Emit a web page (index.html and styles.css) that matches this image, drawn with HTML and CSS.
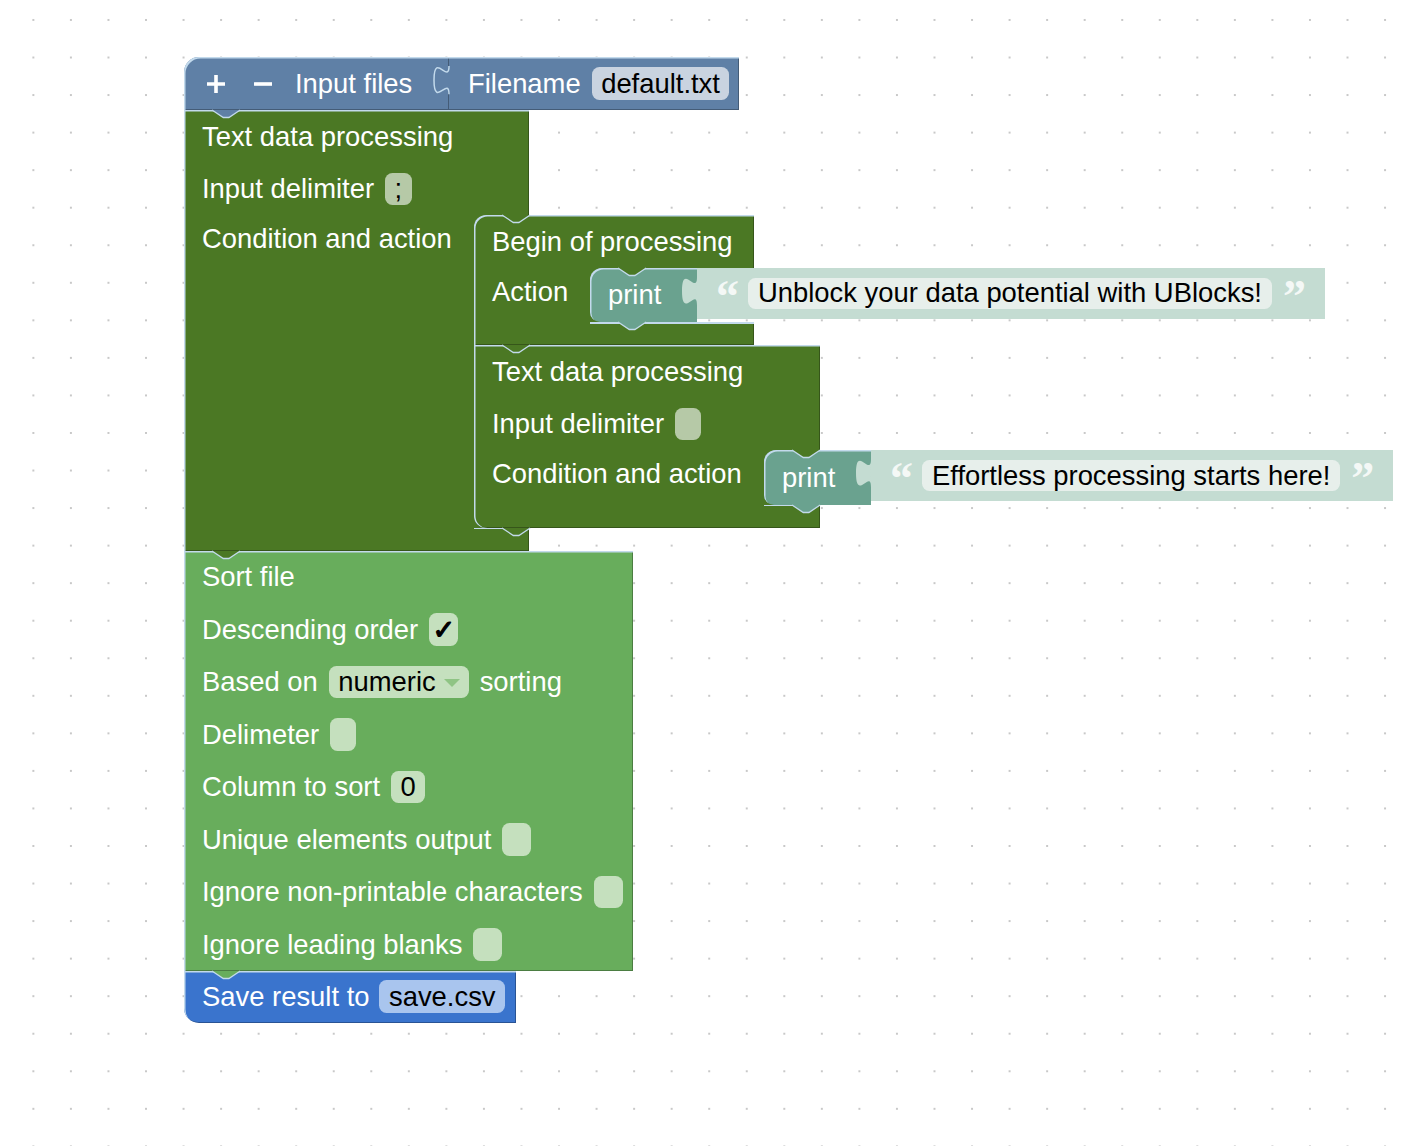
FILE: index.html
```html
<!DOCTYPE html>
<html>
<head>
<meta charset="utf-8">
<title>Blocks</title>
<link rel="stylesheet" href="styles.css">
</head>
<body>
<div class="ws">
  <div class="stack">

    <!-- Input files + Filename -->
    <div class="pair">
      <div class="blk simple b-files k-grey">
        <svg class="ico" viewBox="0 0 18 18"><path d="M9 0v18M0 9h18"/></svg>
        <svg class="ico ico-minus" viewBox="0 0 18 18"><path d="M0 9h18"/></svg>
        <span class="lbl">Input files</span>
        <svg class="notch" viewBox="0 0 28.2 7.5"><path class="nf" d="M0 0L11.3 7.5H16.9L28.2 0Z"/><path class="ns" d="M0 0L11.3 7.5H16.9L28.2 0"/></svg>
      </div>
      <div class="blk simple b-filename k-grey">
        <svg class="tab" viewBox="0 0 15 28.2"><path class="tf" d="M15 0C15 18.8 0 -15 0 14.1C0 43.2 15 9.4 15 28.2Z"/><path class="ts" d="M15 0C15 18.8 0 -15 0 14.1C0 43.2 15 9.4 15 28.2"/></svg>
        <span class="lbl">Filename</span>
        <span class="fld">default.txt</span>
      </div>
    </div>

    <!-- Text data processing (outer) -->
    <div class="blk cblk k-dg">
      <div class="c-head w-main">
        <div class="row"><span class="lbl">Text data processing</span></div>
        <div class="row"><span class="lbl">Input delimiter</span><span class="fld">;</span></div>
      </div>
      <div class="c-mid">
        <div class="c-spine sp-wide"><div class="row row-stmt"><span class="lbl">Condition and action</span></div></div>
        <div class="c-stmt">
          <svg class="notch notch-in" viewBox="0 0 28.2 7.5"><path class="nf" d="M0 0L11.3 7.5H16.9L28.2 0Z"/><path class="ns" d="M0 0L11.3 7.5H16.9L28.2 0"/></svg>

          <!-- Begin of processing -->
          <div class="blk cblk k-dg">
            <div class="c-head w-begin rtl">
              <div class="row"><span class="lbl">Begin of processing</span></div>
            </div>
            <div class="c-mid">
              <div class="c-spine sp-begin"><div class="row row-stmt"><span class="lbl">Action</span></div></div>
              <div class="c-stmt">
                <svg class="notch notch-in" viewBox="0 0 28.2 7.5"><path class="nf" d="M0 0L11.3 7.5H16.9L28.2 0Z"/><path class="ns" d="M0 0L11.3 7.5H16.9L28.2 0"/></svg>
                <div class="pair">
                  <div class="blk pbody k-teal">
                    <span class="lbl">print</span>
                    <svg class="notch" viewBox="0 0 28.2 7.5"><path class="nf" d="M0 0L11.3 7.5H16.9L28.2 0Z"/><path class="ns" d="M0 0L11.3 7.5H16.9L28.2 0"/></svg>
                  </div>
                  <div class="blk txt k-txt">
                    <svg class="tab" viewBox="0 0 15 28.2"><path class="tf" d="M15 0C15 18.8 0 -15 0 14.1C0 43.2 15 9.4 15 28.2Z"/></svg>
                    <span class="q">“</span>
                    <span class="fld">Unblock your data potential with UBlocks!</span>
                    <span class="q">”</span>
                  </div>
                </div>
              </div>
            </div>
            <div class="c-arm w-begin sp-begin-arm"></div>
            <svg class="notch" viewBox="0 0 28.2 7.5"><path class="nf" d="M0 0L11.3 7.5H16.9L28.2 0Z"/><path class="ns" d="M0 0L11.3 7.5H16.9L28.2 0"/></svg>
          </div>

          <!-- Text data processing (inner) -->
          <div class="blk cblk k-dg">
            <div class="c-head w-inner">
              <div class="row"><span class="lbl">Text data processing</span></div>
              <div class="row"><span class="lbl">Input delimiter</span><span class="fld fld-empty"></span></div>
            </div>
            <div class="c-mid">
              <div class="c-spine sp-wide"><div class="row row-stmt"><span class="lbl">Condition and action</span></div></div>
              <div class="c-stmt">
                <svg class="notch notch-in" viewBox="0 0 28.2 7.5"><path class="nf" d="M0 0L11.3 7.5H16.9L28.2 0Z"/><path class="ns" d="M0 0L11.3 7.5H16.9L28.2 0"/></svg>
                <div class="pair">
                  <div class="blk pbody k-teal">
                    <span class="lbl">print</span>
                    <svg class="notch" viewBox="0 0 28.2 7.5"><path class="nf" d="M0 0L11.3 7.5H16.9L28.2 0Z"/><path class="ns" d="M0 0L11.3 7.5H16.9L28.2 0"/></svg>
                  </div>
                  <div class="blk txt k-txt">
                    <svg class="tab" viewBox="0 0 15 28.2"><path class="tf" d="M15 0C15 18.8 0 -15 0 14.1C0 43.2 15 9.4 15 28.2Z"/></svg>
                    <span class="q">“</span>
                    <span class="fld">Effortless processing starts here!</span>
                    <span class="q">”</span>
                  </div>
                </div>
              </div>
            </div>
            <div class="c-arm w-inner sp-wide-arm rbl"></div>
            <svg class="notch" viewBox="0 0 28.2 7.5"><path class="nf" d="M0 0L11.3 7.5H16.9L28.2 0Z"/><path class="ns" d="M0 0L11.3 7.5H16.9L28.2 0"/></svg>
          </div>
        </div>
      </div>
      <div class="c-arm w-main sp-wide-arm"></div>
      <svg class="notch" viewBox="0 0 28.2 7.5"><path class="nf" d="M0 0L11.3 7.5H16.9L28.2 0Z"/><path class="ns" d="M0 0L11.3 7.5H16.9L28.2 0"/></svg>
    </div>

    <!-- Sort file -->
    <div class="blk simple sort k-lg">
      <div class="row"><span class="lbl">Sort file</span></div>
      <div class="row"><span class="lbl">Descending order</span><span class="fld fld-box"><span class="check">✓</span></span></div>
      <div class="row"><span class="lbl">Based on</span><span class="fld fld-drop">numeric<span class="arrow"></span></span><span class="lbl">sorting</span></div>
      <div class="row"><span class="lbl">Delimeter</span><span class="fld fld-empty"></span></div>
      <div class="row"><span class="lbl">Column to sort</span><span class="fld">0</span></div>
      <div class="row"><span class="lbl">Unique elements output</span><span class="fld fld-box"></span></div>
      <div class="row"><span class="lbl">Ignore non-printable characters</span><span class="fld fld-box"></span></div>
      <div class="row"><span class="lbl">Ignore leading blanks</span><span class="fld fld-box"></span></div>
      <svg class="notch" viewBox="0 0 28.2 7.5"><path class="nf" d="M0 0L11.3 7.5H16.9L28.2 0Z"/><path class="ns" d="M0 0L11.3 7.5H16.9L28.2 0"/></svg>
    </div>

    <!-- Save result -->
    <div class="blk simple save k-blue">
      <div class="row row-save"><span class="lbl">Save result to</span><span class="fld">save.csv</span></div>
    </div>

  </div>
</div>
</body>
</html>
```

FILE: styles.css
```css
* { box-sizing: border-box; margin: 0; padding: 0; }

html, body { width: 100%; height: 100%; }

body {
  background: #fff;
  font-family: "Liberation Sans", Arial, Helvetica, sans-serif;
  overflow: hidden;
}

.ws {
  position: relative;
  width: 1418px;
  height: 1146px;
  background-color: #fff;
  background-image: radial-gradient(circle at center, #c8c8c8 0, #c8c8c8 0.9px, rgba(200,200,200,0) 1.4px);
  background-size: 37.55px 37.55px;
  background-position: 14.6px 1.2px;
}

/* the block stack sits at its place on the workspace canvas */
.stack {
  position: absolute;
  left: 184px;
  top: 57px;
  display: flex;
  flex-direction: column;
  align-items: flex-start;
}

/* colour themes */
.k-grey { --bg: #5f80a6; --f: #c9d3e0; }
.k-dg   { --bg: #4b7824; --f: #b6c9a7; }
.k-teal { --bg: #6aa28f; --f: #c4dcd2; }
.k-txt  { --bg: #c4dcd2; --f: #e7efeb; }
.k-lg   { --bg: #68ad5c; --f: #c5e0be; }
.k-blue { --bg: #3a74cd; --f: #a9c5ee; }

.stack { --hl: #c3daec; --dk: rgba(0, 0, 0, 0.28); }

.blk { position: relative; }

.simple {
  background: var(--bg);
  box-shadow: inset 1.5px 1.5px 0 var(--hl), inset -1px -1px 0 var(--dk);
}

.pair {
  display: flex;
  align-items: flex-start;
}

.lbl {
  color: #fff;
  font-size: 27.4px;
  line-height: 1;
  white-space: nowrap;
}

.row {
  height: 52.5px;
  display: flex;
  align-items: center;
  gap: 11px;
  padding-left: 18px;
}

.fld {
  display: inline-flex;
  align-items: center;
  height: 32.5px;
  padding: 0 9.5px;
  border-radius: 7.5px;
  background: var(--f);
  color: #000;
  font-size: 27.4px;
  line-height: 1;
  white-space: nowrap;
}

.fld-empty { width: 26px; padding: 0; }
.fld-box { width: 29px; padding: 0; justify-content: center; }

.check {
  font-family: "DejaVu Sans", sans-serif;
  font-weight: bold;
  font-size: 27px;
  line-height: 1;
  color: #000;
  -webkit-text-stroke: 1.2px #000;
}

.fld-drop { padding-right: 9px; }

.arrow {
  width: 0;
  height: 0;
  margin-left: 8px;
  margin-top: 2px;
  border-left: 8px solid transparent;
  border-right: 8px solid transparent;
  border-top: 8px solid #8fc484;
}

/* notches: next-connection tab that pokes into the block below */
.notch {
  position: absolute;
  left: 28.2px;
  top: 100%;
  width: 28.2px;
  height: 7.5px;
  overflow: visible;
  z-index: 5;
}
.notch .nf { fill: var(--bg); }
.notch .ns { fill: none; stroke: var(--hl); stroke-width: 1.3; }
.notch-in { top: 0; }

/* output puzzle tab */
.tab {
  position: absolute;
  left: -15px;
  top: 9.4px;
  width: 15px;
  height: 28.2px;
  overflow: visible;
  z-index: 5;
}
.tab .tf { fill: var(--bg); }
.tab .ts { fill: none; stroke: var(--hl); stroke-width: 1.5; }

/* Input files block */
.b-files {
  width: 265px;
  height: 53px;
  display: flex;
  align-items: center;
  padding-left: 23px;
  border-top-left-radius: 15px;
}
.ico {
  width: 18px;
  height: 18px;
  margin-right: 29px;
  flex: none;
}
.ico path { stroke: #fff; stroke-width: 3.6; fill: none; }
.ico-minus { margin-right: 23px; }

.b-filename {
  width: 290px;
  height: 53px;
  display: flex;
  align-items: center;
  gap: 11px;
  padding-left: 19px;
  box-shadow: inset 0 1.5px 0 var(--hl), inset -1px -1px 0 var(--dk);
}

/* C shaped blocks */
.cblk {
  display: flex;
  flex-direction: column;
  align-items: flex-start;
}
.c-head {
  background: var(--bg);
  box-shadow: inset 1.5px 1.5px 0 var(--hl), inset -1px 0 0 var(--dk);
}
.c-mid {
  display: flex;
  align-items: flex-start;
}
.c-spine {
  position: relative;
  align-self: stretch;
  background: var(--bg);
  box-shadow: inset 1.5px 0 0 var(--hl);
}
.c-spine::before,
.c-spine::after {
  content: "";
  position: absolute;
  left: 100%;
  width: 16px;
  height: 16px;
  background: var(--bg);
}
.c-spine::before { top: 0; }
.c-spine::after { bottom: 0; }

.c-stmt {
  position: relative;
  display: flex;
  flex-direction: column;
  align-items: flex-start;
}
.c-arm {
  position: relative;
  height: 23px;
  background: var(--bg);
  box-shadow: inset 1.5px 0 0 var(--hl), inset -1px -1px 0 var(--dk);
}
.c-arm::before {
  content: "";
  position: absolute;
  top: 0;
  right: 0;
  height: 1.5px;
  background: var(--hl);
}

.w-main { width: 345px; }
.w-begin { width: 280px; }
.w-inner { width: 346px; }
.sp-wide { width: 290px; }
.sp-begin { width: 116px; }
.sp-wide-arm::before { left: 290px; }
.sp-begin-arm::before { left: 116px; }

.row-stmt { height: 48px; }

.rtl { border-top-left-radius: 12px; }
.rbl { border-bottom-left-radius: 12px; }

/* print + text */
.pbody {
  width: 107px;
  height: 54.5px;
  display: flex;
  align-items: center;
  padding-left: 18px;
  background: var(--bg);
  border-top-left-radius: 12px;
  border-bottom-left-radius: 10px;
  box-shadow: inset 1.5px 1.5px 0 var(--hl);
}
.txt {
  height: 51px;
  display: flex;
  align-items: center;
  padding: 0 20px 0 19px;
  background: var(--bg);
}
.txt .fld {
  height: 31px;
  padding: 0 10px;
  margin: 0 11px 0 10px;
}
.q {
  align-self: flex-start;
  width: 22px;
  margin-top: 6px;
  color: #f4f8f6;
  font-family: "Liberation Serif", serif;
  font-weight: bold;
  font-size: 46px;
  line-height: 46px;
  text-align: center;
}

/* Sort file */
.sort { width: 449px; }

/* Save */
.save {
  width: 332px;
  height: 52px;
  border-bottom-left-radius: 15px;
}
.row-save { height: 52px; gap: 10px; }
```
